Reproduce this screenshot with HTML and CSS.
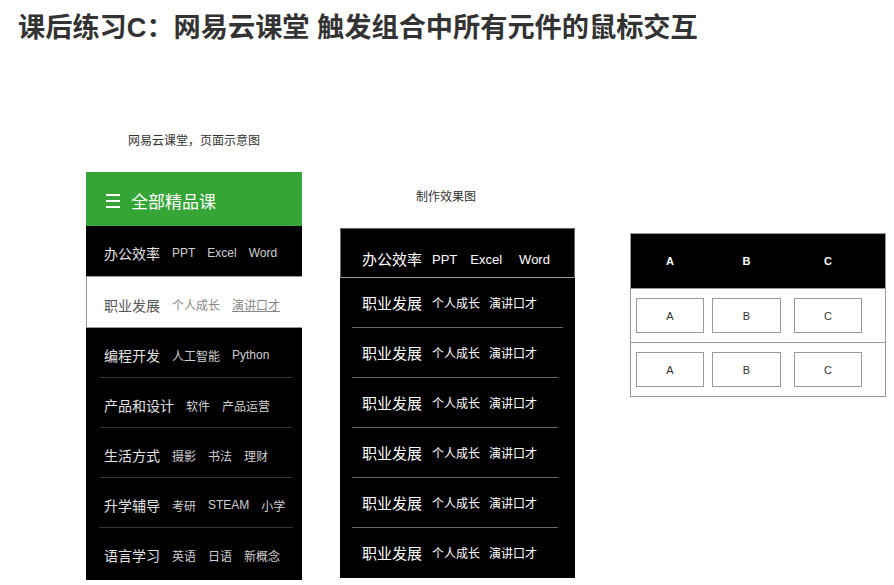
FILE: index.html
```html
<!DOCTYPE html>
<html lang="zh-CN">
<head>
<meta charset="utf-8">
<title>课后练习C</title>
<link rel="stylesheet" href="styles.css">
</head>
<body>
<h1 class="title">课后练习C：网易云课堂 触发组合中所有元件的鼠标交互</h1>
<div class="stage">
  <div class="col col-demo">
    <div class="caption">网易云课堂，页面示意图</div>
    <div class="nav">
      <div class="nav-head">
        <svg class="menu-icon" width="14" height="16" viewBox="0 0 14 16"><rect x="0" y="1" width="14" height="2" fill="#fff"/><rect x="0" y="7" width="14" height="2" fill="#fff"/><rect x="0" y="13" width="14" height="2" fill="#fff"/></svg>
        <span>全部精品课</span>
      </div>
      <div class="nav-row nosep"><span class="nav-main">办公效率</span><span class="nav-sub">PPT</span><span class="nav-sub">Excel</span><span class="nav-sub">Word</span></div>
      <div class="nav-row active"><span class="nav-main">职业发展</span><span class="nav-sub">个人成长</span><span class="nav-sub u">演讲口才</span></div>
      <div class="nav-row"><span class="nav-main">编程开发</span><span class="nav-sub">人工智能</span><span class="nav-sub">Python</span></div>
      <div class="nav-row"><span class="nav-main">产品和设计</span><span class="nav-sub">软件</span><span class="nav-sub">产品运营</span></div>
      <div class="nav-row"><span class="nav-main">生活方式</span><span class="nav-sub">摄影</span><span class="nav-sub">书法</span><span class="nav-sub">理财</span></div>
      <div class="nav-row"><span class="nav-main">升学辅导</span><span class="nav-sub">考研</span><span class="nav-sub">STEAM</span><span class="nav-sub">小学</span></div>
      <div class="nav-row nosep"><span class="nav-main">语言学习</span><span class="nav-sub">英语</span><span class="nav-sub">日语</span><span class="nav-sub">新概念</span></div>
    </div>
  </div>

  <div class="col col-effect">
    <div class="caption caption-left">制作效果图</div>
    <div class="effect">
      <div class="eff-head"><span class="eff-main">办公效率</span><span class="eff-sub">PPT</span><span class="eff-sub">Excel</span><span class="eff-sub">Word</span></div>
      <div class="eff-row"><span class="eff-main">职业发展</span><span class="eff-sub">个人成长</span><span class="eff-sub">演讲口才</span></div>
      <div class="eff-row"><span class="eff-main">职业发展</span><span class="eff-sub">个人成长</span><span class="eff-sub">演讲口才</span></div>
      <div class="eff-row"><span class="eff-main">职业发展</span><span class="eff-sub">个人成长</span><span class="eff-sub">演讲口才</span></div>
      <div class="eff-row"><span class="eff-main">职业发展</span><span class="eff-sub">个人成长</span><span class="eff-sub">演讲口才</span></div>
      <div class="eff-row"><span class="eff-main">职业发展</span><span class="eff-sub">个人成长</span><span class="eff-sub">演讲口才</span></div>
      <div class="eff-row nosep"><span class="eff-main">职业发展</span><span class="eff-sub">个人成长</span><span class="eff-sub">演讲口才</span></div>
    </div>
  </div>

  <div class="col col-table">
    <div class="gtable">
      <div class="t-head"><span class="cell c1">A</span><span class="cell c2">B</span><span class="cell c3">C</span></div>
      <div class="t-row"><span class="box c1">A</span><span class="box c2">B</span><span class="box c3">C</span></div>
      <div class="t-row last"><span class="box c1">A</span><span class="box c2">B</span><span class="box c3">C</span></div>
    </div>
  </div>
</div>
</body>
</html>
```

FILE: styles.css
```css
* { box-sizing: border-box; }

body {
  margin: 0;
  background: #fff;
  color: #333;
  font-family: "Liberation Sans", "Noto Sans CJK SC", sans-serif;
}

.title {
  margin: 0;
  padding: 12px 0 0 18px;
  font-size: 27.2px;
  line-height: 32px;
  font-weight: bold;
  color: #333;
}

.stage {
  display: flex;
  align-items: flex-start;
  padding-left: 86px;
}

.caption {
  font-size: 12px;
  line-height: 14px;
  text-align: center;
  color: #333;
  margin-bottom: 24px;
}

.caption-left {
  text-align: left;
  padding-left: 76px;
}

/* ---------- left: demo nav ---------- */
.col-demo {
  width: 216px;
  margin-top: 90px;
}

.nav {
  background: #000;
  padding-bottom: 2px;
}

.nav-head {
  height: 54px;
  background: #35a535;
  display: flex;
  align-items: center;
  gap: 11px;
  padding: 3px 0 0 20px;
  color: #fff;
  font-size: 17px;
}

.menu-icon { display: block; }

.nav-row {
  height: 50px;
  margin: 0 9px 0 13px;
  padding: 5px 0 0 5px;
  display: flex;
  align-items: center;
  gap: 12px;
  border-bottom: 1px solid #333;
  white-space: nowrap;
}

.nav-row.nosep { border-bottom-color: transparent; }

.nav-main {
  font-size: 14px;
  color: #e2e2e2;
}

.nav-sub {
  font-size: 12px;
  color: #cfcfcf;
}

.nav-row.active {
  height: 52px;
  margin: 0;
  padding-left: 17px;
  background: #fff;
  border: 1px solid #999;
  border-right: 0;
}

.nav-row.active .nav-main { color: #555; }
.nav-row.active .nav-sub { color: #888; }
.nav-sub.u { text-decoration: underline; }

/* ---------- middle: effect ---------- */
.col-effect {
  width: 235px;
  margin-left: 38px;
  margin-top: 146px;
}

.effect {
  background: #000;
  color: #fff;
}

.eff-head {
  height: 50px;
  border: 1px solid #666;
  border-bottom: 1px solid #999;
  display: flex;
  align-items: flex-end;
  padding: 0 0 7px 21px;
  white-space: nowrap;
  line-height: 20px;
}

.eff-head .eff-sub { font-size: 13px; }
.eff-head .eff-sub:nth-child(2) { margin-left: 10px; }
.eff-head .eff-sub:nth-child(3) { margin-left: 13px; }
.eff-head .eff-sub:nth-child(4) { margin-left: 17px; }

.eff-row {
  height: 50px;
  margin: 0 17px 0 12px;
  padding-left: 10px;
  display: flex;
  align-items: center;
  gap: 9px;
  border-bottom: 1px solid #666;
  white-space: nowrap;
}

.eff-head + .eff-row { margin-right: 12px; }

.eff-row.nosep { border-bottom-color: transparent; }

.eff-main {
  font-size: 15px;
  color: #fff;
}

.eff-row .eff-main { margin-right: 1px; }

.eff-sub {
  font-size: 12px;
  color: #fff;
}

/* ---------- right: grid table ---------- */
.col-table {
  width: 256px;
  margin-left: 55px;
  margin-top: 189px;
}

.gtable {
  border: 1px solid #999;
}

.t-head,
.t-row {
  display: grid;
  grid-template-columns: 76px 82px 68px;
  padding-left: 5px;
}

.t-head {
  height: 55px;
  background: #000;
  border-bottom: 1px solid #999;
  align-items: center;
}

.cell {
  font-size: 11px;
  font-weight: bold;
  color: #fff;
  text-align: center;
  width: 68px;
}

.cell.c2 { width: 69px; }

.t-row {
  height: 54px;
  padding-top: 9px;
  border-bottom: 1px solid #999;
  align-items: start;
}

.t-row.last {
  height: 53px;
  border-bottom: 0;
}

.box {
  width: 68px;
  height: 35px;
  border: 1px solid #999;
  background: #fff;
  font-size: 11px;
  color: #333;
  display: flex;
  align-items: center;
  justify-content: center;
}

.box.c2 { width: 69px; }
```
